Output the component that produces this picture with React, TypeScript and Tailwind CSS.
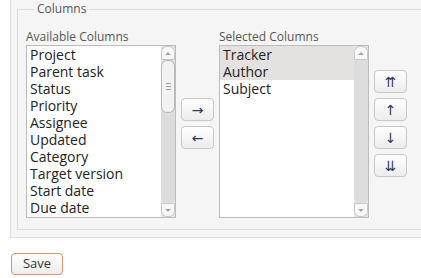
const available = [
  "Project",
  "Parent task",
  "Status",
  "Priority",
  "Assignee",
  "Updated",
  "Category",
  "Target version",
  "Start date",
  "Due date",
];

const selected = ["Tracker", "Author", "Subject"];

const ScrollBar = ({ thumb }: { thumb: boolean }) => (
  <div className="flex w-[14px] flex-col bg-[#e4e4e4]">
    <div className="flex h-[14px] items-center justify-center rounded-t-[6px] border border-[#c9c9c9] bg-[#f7f7f7]">
      <div className="h-0 w-0 border-x-[3px] border-b-[3px] border-x-transparent border-b-[#a8a8a8]" />
    </div>
    <div className="flex-1 rounded-b-[6px] bg-[#dcdcdc]">
      {thumb && (
        <div className="flex h-[53px] flex-col items-center justify-center gap-[2px] rounded-[6px] border border-[#b9b9b9] bg-[#f2f2f2]">
          <div className="h-px w-[5px] bg-[#a0a0a0]" />
          <div className="h-px w-[5px] bg-[#a0a0a0]" />
          <div className="h-px w-[5px] bg-[#a0a0a0]" />
        </div>
      )}
    </div>
    <div className="flex h-[14px] items-center justify-center rounded-b-[6px] border border-[#c9c9c9] bg-[#f7f7f7]">
      <div className="h-0 w-0 border-x-[3px] border-t-[3px] border-x-transparent border-t-[#a8a8a8]" />
    </div>
  </div>
);

const ListBox = ({
  label,
  items,
  highlighted = [],
  thumb,
}: {
  label: string;
  items: string[];
  highlighted?: string[];
  thumb: boolean;
}) => (
  <div className="flex w-[150px] flex-col">
    <div className="h-[16px] text-[12px] leading-[16px] text-[#555]">{label}</div>
    <div className="flex h-[173px] border border-[#bcbcbc] bg-white">
      <div className="flex-1 overflow-hidden">
        {items.map((item) => (
          <div
            key={item}
            className={`h-[17px] pl-[3px] text-[14px] leading-[17px] text-[#222] ${
              highlighted.includes(item) ? "bg-[#e3e2e0]" : ""
            }`}
          >
            {item}
          </div>
        ))}
      </div>
      <ScrollBar thumb={thumb} />
    </div>
  </div>
);

const ArrowButton = ({ glyph }: { glyph: string }) => (
  <button className="flex h-[23px] w-[33px] items-center justify-center rounded-[4px] border border-[#c8c8c8] bg-gradient-to-b from-white to-[#ececec] font-['DejaVu_Sans',sans-serif] text-[14px] leading-none text-[#2d3a57]">
    {glyph}
  </button>
);

const App = () => {
  return (
    <div className="h-[278px] w-[421px] overflow-hidden bg-white font-['Open_Sans',sans-serif]">
      <div className="ml-[10px] h-[238px] border-b border-l border-[#e0e0e0] bg-[#f5f5f5] pl-[6px] pt-[1px]">
        <fieldset className="h-[229px] border border-r-0 border-[#dcdcdc] pl-[8px]">
          <legend className="ml-[8px] px-[3px] text-[12px] leading-[16px] text-[#555]">Columns</legend>
          <div className="mt-[12px] flex items-center gap-[5px]">
            <ListBox label="Available Columns" items={available} thumb />
            <div className="flex flex-col gap-[5px]">
              <ArrowButton glyph="→" />
              <ArrowButton glyph="←" />
            </div>
            <ListBox label="Selected Columns" items={selected} highlighted={["Tracker", "Author"]} thumb={false} />
            <div className="flex flex-col gap-[5px]">
              <ArrowButton glyph="⇈" />
              <ArrowButton glyph="↑" />
              <ArrowButton glyph="↓" />
              <ArrowButton glyph="⇊" />
            </div>
          </div>
        </fieldset>
      </div>
      <div className="pl-[11px] pt-[12px]">
        <button className="h-[22px] w-[52px] rounded-[4px] border border-[#e5906c] bg-gradient-to-b from-white to-[#ededed] text-[13px] leading-none text-[#333]">
          Save
        </button>
      </div>
    </div>
  );
};

export default App;
